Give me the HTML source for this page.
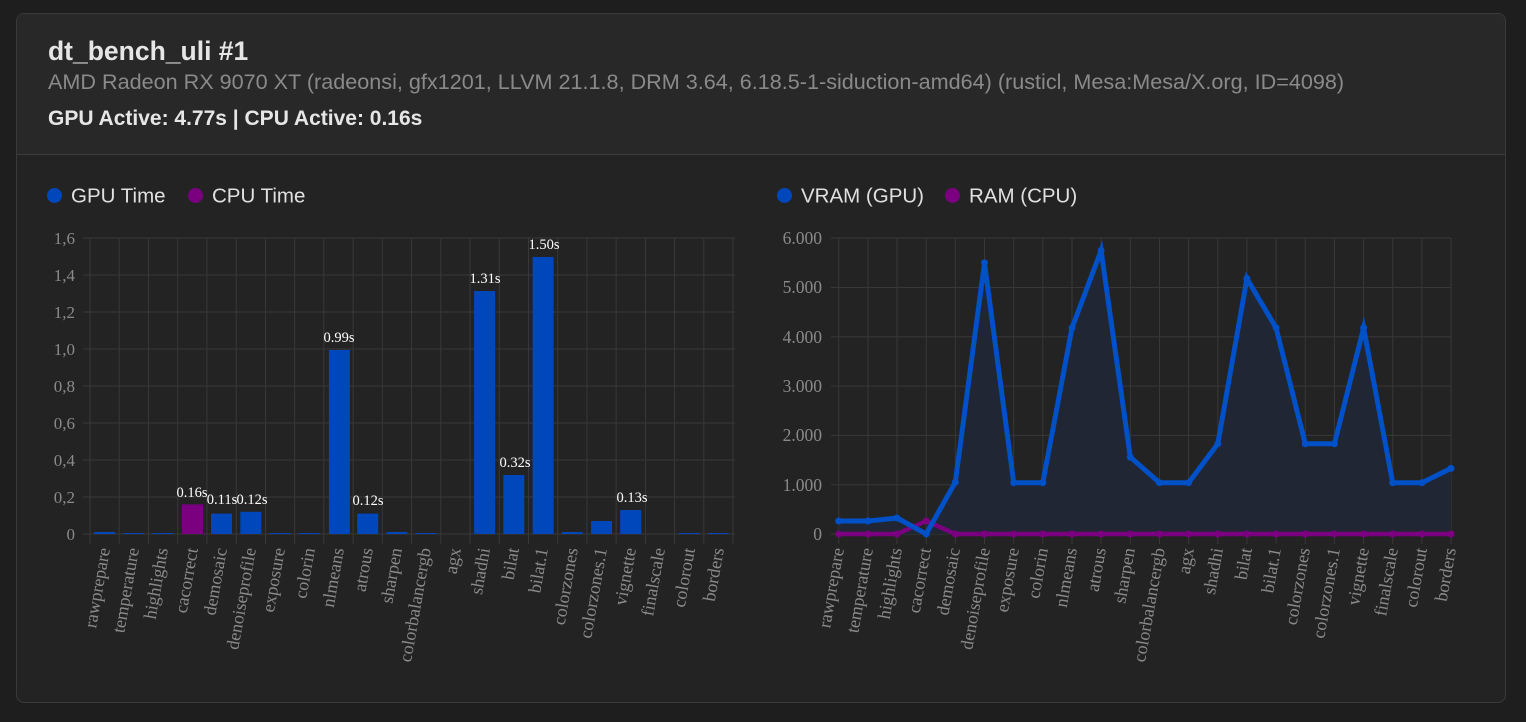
<!DOCTYPE html>
<html><head><meta charset="utf-8"><style>
body{margin:0;width:1526px;height:722px;background:#1e1e1e;font-family:"Liberation Sans",sans-serif;position:relative;overflow:hidden}
.card{position:absolute;left:16px;top:13px;width:1488px;height:688px;border:1px solid #3a3a3a;border-radius:8px;background:#232323;overflow:hidden}
.hdr{position:absolute;left:0;top:0;width:100%;height:140px;background:#282828;border-bottom:1px solid #3c3c3c}
.t{position:absolute;left:31px;top:22px;font-size:26.5px;font-weight:bold;color:#e6e6e6}
.s{position:absolute;left:31px;top:55px;font-size:21.6px;color:#8a8a8a;white-space:nowrap}
.a{position:absolute;left:31px;top:93px;font-size:21px;font-weight:bold;color:#e6e6e6;white-space:nowrap}
svg{position:absolute;left:0;top:0}
</style></head><body>
<div class="card"><div class="hdr">
<div class="t">dt_bench_uli #1</div>
<div class="s">AMD Radeon RX 9070 XT (radeonsi, gfx1201, LLVM 21.1.8, DRM 3.64, 6.18.5-1-siduction-amd64) (rusticl, Mesa:Mesa/X.org, ID=4098)</div>
<div class="a">GPU Active: 4.77s | CPU Active: 0.16s</div>
</div></div>
<svg width="1526" height="722" xmlns="http://www.w3.org/2000/svg">
<g font-family="Liberation Sans,sans-serif" font-size="20.5" fill="#e0e0e0">
<circle cx="54.5" cy="195.5" r="7.5" fill="#0047bb"/><text x="71" y="202.5">GPU Time</text>
<circle cx="195.5" cy="195.5" r="7.5" fill="#7a0080"/><text x="212" y="202.5">CPU Time</text>
<circle cx="784.5" cy="195.5" r="7.5" fill="#0047bb"/><text x="801" y="202.5">VRAM (GPU)</text>
<circle cx="952.5" cy="195.5" r="7.5" fill="#7a0080"/><text x="969" y="202.5">RAM (CPU)</text>
</g>
<g stroke="#383838" stroke-width="1">
<path d="M83 238H735M83 275H735M83 312H735M83 349H735M83 386H735M83 423H735M83 460H735M83 497H735M83 534H735"/>
<path d="M90 238V544M119.2 238V544M148.5 238V544M177.7 238V544M206.9 238V544M236.2 238V544M265.4 238V544M294.6 238V544M323.8 238V544M353.1 238V544M382.3 238V544M411.5 238V544M440.8 238V544M470 238V544M499.2 238V544M528.5 238V544M557.7 238V544M586.9 238V544M616.1 238V544M645.4 238V544M674.6 238V544M703.8 238V544M733 238V544"/>
</g>
<g font-family="Liberation Serif,serif" font-size="17" fill="#8a8a8a" text-anchor="end">
<text x="75" y="244">1,6</text><text x="75" y="281">1,4</text><text x="75" y="318">1,2</text><text x="75" y="355">1,0</text><text x="75" y="392">0,8</text><text x="75" y="429">0,6</text><text x="75" y="466">0,4</text><text x="75" y="503">0,2</text><text x="75" y="540">0</text>
</g>
<g fill="#0047bb">
<rect x="94.1" y="532" width="21" height="2"/><rect x="123.3" y="533" width="21" height="1"/><rect x="152.6" y="533" width="21" height="1"/>
<rect x="182" y="504.4" width="21" height="29.6" fill="#7a0080"/>
<rect x="211" y="513.6" width="21" height="20.4"/><rect x="240.3" y="511.8" width="21" height="22.2"/>
<rect x="269.5" y="533" width="21" height="1"/><rect x="298.7" y="533" width="21" height="1"/>
<rect x="328.9" y="350" width="21" height="184"/><rect x="357.2" y="513.6" width="21" height="20.4"/>
<rect x="386.4" y="532" width="21" height="2"/><rect x="415.6" y="533" width="21" height="1"/>
<rect x="474.1" y="291" width="21" height="243"/><rect x="503.3" y="475" width="21" height="59"/><rect x="532.6" y="257" width="21" height="277"/>
<rect x="561.8" y="532" width="21" height="2"/><rect x="591" y="521" width="21" height="13"/><rect x="620.2" y="510" width="21" height="24"/>
<rect x="678.7" y="533" width="21" height="1"/><rect x="707.9" y="533" width="21" height="1"/>
</g>
<g font-family="Liberation Serif,serif" font-size="14.5" fill="#ffffff" text-anchor="middle">
<text x="192" y="497">0.16s</text><text x="222" y="504">0.11s</text><text x="252" y="504">0.12s</text>
<text x="339" y="342">0.99s</text><text x="368" y="505">0.12s</text><text x="485" y="283">1.31s</text>
<text x="515" y="467">0.32s</text><text x="544" y="249">1.50s</text><text x="632" y="502">0.13s</text>
</g>
<g font-family="Liberation Serif,serif" font-size="18" fill="#8a8a8a" text-anchor="end">
<text transform="translate(110,549) rotate(-80)">rawprepare</text>
<text transform="translate(139,549) rotate(-80)">temperature</text>
<text transform="translate(168,549) rotate(-80)">highlights</text>
<text transform="translate(198,549) rotate(-80)">cacorrect</text>
<text transform="translate(227,549) rotate(-80)">demosaic</text>
<text transform="translate(256,549) rotate(-80)">denoiseprofile</text>
<text transform="translate(285,549) rotate(-80)">exposure</text>
<text transform="translate(315,549) rotate(-80)">colorin</text>
<text transform="translate(344,549) rotate(-80)">nlmeans</text>
<text transform="translate(373,549) rotate(-80)">atrous</text>
<text transform="translate(402,549) rotate(-80)">sharpen</text>
<text transform="translate(431,549) rotate(-80)">colorbalancergb</text>
<text transform="translate(461,549) rotate(-80)">agx</text>
<text transform="translate(490,549) rotate(-80)">shadhi</text>
<text transform="translate(519,549) rotate(-80)">bilat</text>
<text transform="translate(548,549) rotate(-80)">bilat.1</text>
<text transform="translate(578,549) rotate(-80)">colorzones</text>
<text transform="translate(607,549) rotate(-80)">colorzones.1</text>
<text transform="translate(636,549) rotate(-80)">vignette</text>
<text transform="translate(665,549) rotate(-80)">finalscale</text>
<text transform="translate(695,549) rotate(-80)">colorout</text>
<text transform="translate(724,549) rotate(-80)">borders</text>
</g>
<g stroke="#383838" stroke-width="1">
<path d="M831 238H1451M831 287.5H1451M831 336.8H1451M831 386.1H1451M831 435.4H1451M831 484.7H1451M831 534H1451"/>
<path d="M838.7 238V544M867.9 238V544M897 238V544M926.2 238V544M955.3 238V544M984.5 238V544M1013.7 238V544M1042.8 238V544M1072 238V544M1101.1 238V544M1130.3 238V544M1159.5 238V544M1188.6 238V544M1217.8 238V544M1246.9 238V544M1276.1 238V544M1305.3 238V544M1334.4 238V544M1363.6 238V544M1392.7 238V544M1421.9 238V544M1451 238V544"/>
</g>
<g font-family="Liberation Serif,serif" font-size="17.5" fill="#8a8a8a" text-anchor="end">
<text x="822" y="244">6.000</text><text x="822" y="293">5.000</text><text x="822" y="343">4.000</text><text x="822" y="392">3.000</text><text x="822" y="441">2.000</text><text x="822" y="491">1.000</text><text x="822" y="540">0</text>
</g>
<path d="M838.7 521L867.9 521L897 518L926.2 534L955.3 482.2L984.5 262.9L1013.7 482.7L1042.8 482.7L1072 327.9L1101.1 250.5L1130.3 457.1L1159.5 482.7L1188.6 482.7L1217.8 443.8L1246.9 278.6L1276.1 327.9L1305.3 443.8L1334.4 443.8L1363.6 327.9L1392.7 482.7L1421.9 482.7L1451 468.4L1451 534L838.7 534Z" fill="#212634"/>
<path d="M838.7 534L867.9 534L897 534L926.2 521L955.3 534L1451 534" fill="none" stroke="#7a0080" stroke-width="4.5" stroke-linejoin="round"/>
<g fill="#7a0080"><circle cx="838.7" cy="534" r="3.5"/><circle cx="867.9" cy="534" r="3.5"/><circle cx="897" cy="534" r="3.5"/><circle cx="926.2" cy="521" r="3.5"/><circle cx="955.3" cy="534" r="3.5"/><circle cx="984.5" cy="534" r="3.5"/><circle cx="1013.7" cy="534" r="3.5"/><circle cx="1042.8" cy="534" r="3.5"/><circle cx="1072" cy="534" r="3.5"/><circle cx="1101.1" cy="534" r="3.5"/><circle cx="1130.3" cy="534" r="3.5"/><circle cx="1159.5" cy="534" r="3.5"/><circle cx="1188.6" cy="534" r="3.5"/><circle cx="1217.8" cy="534" r="3.5"/><circle cx="1246.9" cy="534" r="3.5"/><circle cx="1276.1" cy="534" r="3.5"/><circle cx="1305.3" cy="534" r="3.5"/><circle cx="1334.4" cy="534" r="3.5"/><circle cx="1363.6" cy="534" r="3.5"/><circle cx="1392.7" cy="534" r="3.5"/><circle cx="1421.9" cy="534" r="3.5"/><circle cx="1451" cy="534" r="3.5"/></g>
<path d="M838.7 521L867.9 521L897 518L926.2 534L955.3 482.2L984.5 262.9L1013.7 482.7L1042.8 482.7L1072 327.9L1101.1 250.5L1130.3 457.1L1159.5 482.7L1188.6 482.7L1217.8 443.8L1246.9 278.6L1276.1 327.9L1305.3 443.8L1334.4 443.8L1363.6 327.9L1392.7 482.7L1421.9 482.7L1451 468.4" fill="none" stroke="#0050c8" stroke-width="5" stroke-linejoin="miter" stroke-miterlimit="6"/>
<g fill="#0050c8"><circle cx="838.7" cy="521" r="3.5"/><circle cx="867.9" cy="521" r="3.5"/><circle cx="897" cy="518" r="3.5"/><circle cx="926.2" cy="534" r="3.5"/><circle cx="955.3" cy="482.2" r="3.5"/><circle cx="984.5" cy="262.9" r="3.5"/><circle cx="1013.7" cy="482.7" r="3.5"/><circle cx="1042.8" cy="482.7" r="3.5"/><circle cx="1072" cy="327.9" r="3.5"/><circle cx="1101.1" cy="250.5" r="3.5"/><circle cx="1130.3" cy="457.1" r="3.5"/><circle cx="1159.5" cy="482.7" r="3.5"/><circle cx="1188.6" cy="482.7" r="3.5"/><circle cx="1217.8" cy="443.8" r="3.5"/><circle cx="1246.9" cy="278.6" r="3.5"/><circle cx="1276.1" cy="327.9" r="3.5"/><circle cx="1305.3" cy="443.8" r="3.5"/><circle cx="1334.4" cy="443.8" r="3.5"/><circle cx="1363.6" cy="327.9" r="3.5"/><circle cx="1392.7" cy="482.7" r="3.5"/><circle cx="1421.9" cy="482.7" r="3.5"/><circle cx="1451" cy="468.4" r="3.5"/></g>
<g font-family="Liberation Serif,serif" font-size="18" fill="#8a8a8a" text-anchor="end">
<text transform="translate(844,549) rotate(-80)">rawprepare</text>
<text transform="translate(873,549) rotate(-80)">temperature</text>
<text transform="translate(902,549) rotate(-80)">highlights</text>
<text transform="translate(931,549) rotate(-80)">cacorrect</text>
<text transform="translate(960,549) rotate(-80)">demosaic</text>
<text transform="translate(990,549) rotate(-80)">denoiseprofile</text>
<text transform="translate(1019,549) rotate(-80)">exposure</text>
<text transform="translate(1048,549) rotate(-80)">colorin</text>
<text transform="translate(1077,549) rotate(-80)">nlmeans</text>
<text transform="translate(1106,549) rotate(-80)">atrous</text>
<text transform="translate(1135,549) rotate(-80)">sharpen</text>
<text transform="translate(1165,549) rotate(-80)">colorbalancergb</text>
<text transform="translate(1194,549) rotate(-80)">agx</text>
<text transform="translate(1223,549) rotate(-80)">shadhi</text>
<text transform="translate(1252,549) rotate(-80)">bilat</text>
<text transform="translate(1281,549) rotate(-80)">bilat.1</text>
<text transform="translate(1310,549) rotate(-80)">colorzones</text>
<text transform="translate(1340,549) rotate(-80)">colorzones.1</text>
<text transform="translate(1369,549) rotate(-80)">vignette</text>
<text transform="translate(1398,549) rotate(-80)">finalscale</text>
<text transform="translate(1427,549) rotate(-80)">colorout</text>
<text transform="translate(1456,549) rotate(-80)">borders</text>
</g>
</svg>
</body></html>
